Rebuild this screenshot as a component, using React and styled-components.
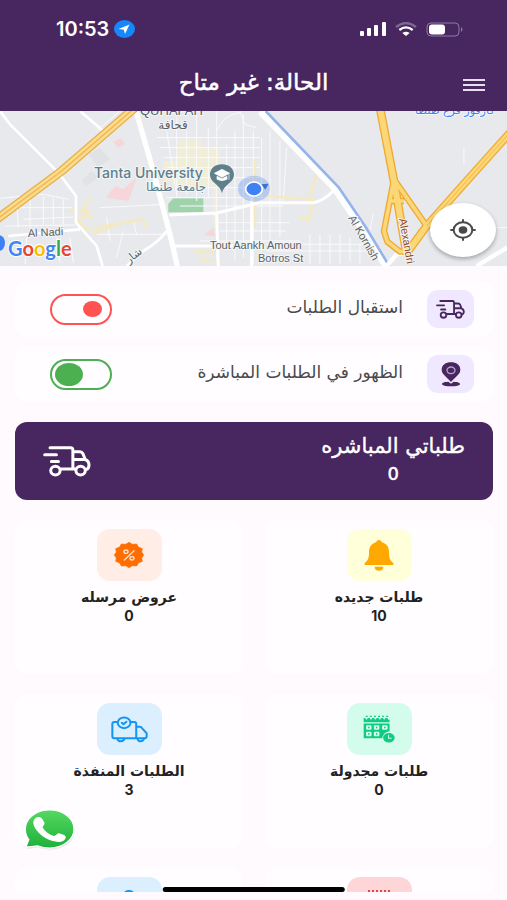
import React, {useState} from 'react';
import styled, {createGlobalStyle} from 'styled-components';

const GlobalStyle = createGlobalStyle`
    * {
        box-sizing: border-box;
    }
    body {
        margin: 0;
        background-color: #fefafe;
        font-family: "DejaVu Sans", sans-serif;
    }
`
const Screen = styled.div`
    display: flex;
    flex-direction: column;
    height: 100vh;
    padding-bottom: 8px;
    background-color: #fefafe;
    overflow: hidden;
`
const Header = styled.header`
    flex: none;
    background-color: #48265f;
    color: white;
`
const StatusBar = styled.div`
    display: flex;
    align-items: center;
    justify-content: space-between;
    direction: ltr;
    height: 58px;
    padding: 0 44px 0 56px;
`
const StatusGroup = styled.div`
    display: flex;
    align-items: center;
    gap: ${props => props.$gap}px;
`
const Clock = styled.span`
    font-family: Inter, sans-serif;
    font-size: 20px;
    font-weight: 600;
`
const TitleBar = styled.div`
    display: grid;
    grid-template-columns: 1fr auto 1fr;
    align-items: center;
    height: 53px;
    padding: 0 22px;
`
const Title = styled.h1`
    margin: 0;
    padding-bottom: 6px;
    font-size: 23px;
    line-height: 28px;
    font-weight: 400;
    -webkit-text-stroke: 0.5px currentColor;
`
const IconButton = styled.button`
    display: flex;
    justify-self: start;
    padding: 0;
    border: none;
    background: none;
    color: #e9ddf0;
    cursor: pointer;
`
const MapBox = styled.section`
    position: relative;
    flex: none;
    height: 155px;
    background-color: #e8eaed;
    overflow: hidden;
`
const MapSvg = styled.svg`
    display: block;
    width: 100%;
    height: 100%;
    direction: ltr;
`
const LocateButton = styled.button`
    position: absolute;
    right: 11px;
    bottom: 9px;
    display: flex;
    align-items: center;
    justify-content: center;
    width: 66px;
    height: 54px;
    padding: 0;
    border: none;
    border-radius: 50%;
    background-color: white;
    box-shadow: 0 2px 4px rgba(0, 0, 0, 0.3);
    cursor: pointer;
`
const Content = styled.main`
    display: flex;
    flex: 1;
    flex-direction: column;
    gap: 20px;
    min-height: 0;
    padding: 15px 14px 0 15px;
    overflow-y: auto;
    scrollbar-width: none;
`
const Switches = styled.div`
    display: flex;
    flex: none;
    flex-direction: column;
    gap: 9px;
`
const SwitchRow = styled.div`
    display: flex;
    align-items: center;
    gap: 24px;
    height: 56px;
    padding: 0 19px 0 35px;
    border-radius: 12px;
    background-color: #fffdff;
`
const Tile = styled.div`
    display: flex;
    flex: none;
    align-items: center;
    justify-content: center;
    width: ${props => props.$large ? 65 : 47}px;
    height: ${props => props.$large ? 52 : 38}px;
    border-radius: ${props => props.$large ? 13 : 11}px;
    background-color: ${props => props.$color};
    color: #48265f;
`
const SwitchLabel = styled.label`
    flex: 1;
    padding-bottom: 4px;
    font-size: 17px;
    line-height: 22px;
    color: #4a4a4a;
`
const Switch = styled.input`
    display: flex;
    align-items: center;
    appearance: none;
    width: 62px;
    height: 31px;
    margin: 0;
    padding: 0 ${props => props.checked ? 3 : 8}px;
    border: 2px solid ${props => props.checked ? '#4caf50' : '#ff5252'};
    border-radius: 20px;
    direction: ${props => props.checked ? 'ltr' : 'rtl'};
    cursor: pointer;

    &::before {
        content: '';
        width: ${props => props.checked ? 28 : 19}px;
        height: ${props => props.checked ? 23 : 16}px;
        border-radius: 50%;
        background-color: ${props => props.checked ? '#4caf50' : '#ff5252'};
    }
`
const Banner = styled.button`
    display: flex;
    flex: none;
    align-items: center;
    justify-content: space-between;
    height: 78px;
    padding: 0 28px;
    border: none;
    border-radius: 12px;
    background-color: #48265f;
    color: white;
    font-family: inherit;
    cursor: pointer;
`
const BannerText = styled.span`
    display: flex;
    flex-direction: column;
    align-items: center;
    padding-bottom: 2px;
    font-size: 21px;
    line-height: 28px;
    -webkit-text-stroke: 0.4px currentColor;
`
const Grid = styled.div`
    display: grid;
    grid-template-columns: 1fr 1fr;
    gap: 20px 22px;
`
const Card = styled.article`
    display: flex;
    flex-direction: column;
    align-items: center;
    height: 154px;
    padding-top: 9px;
    border-radius: 12px;
    background-color: #fffdff;
    color: #222;
`
const CardTitle = styled.h2`
    margin: 6px 0 0;
    font-size: 14px;
    line-height: 20px;
    font-weight: 700;
`
const Count = styled.span`
    font-family: Inter, sans-serif;
    font-size: ${props => props.$big ? 17 : 14}px;
    line-height: ${props => props.$big ? 28 : 18}px;
    font-weight: ${props => props.$big ? 500 : 700};
`
const WhatsappLink = styled.a`
    position: fixed;
    left: 24px;
    bottom: 50px;
    display: flex;
`
const HomeIndicator = styled.div`
    position: fixed;
    left: 50%;
    bottom: 8px;
    width: 36%;
    height: 5px;
    border-radius: 3px;
    background-color: black;
    transform: translateX(-50%);
`

const Truck = ({width, height, stroke}) => (
    <svg width={width} height={height} viewBox="0 0 143 92" preserveAspectRatio="none" fill="none" stroke="currentColor" strokeWidth={stroke} strokeLinecap="round" strokeLinejoin="round">
        <path d="M21 5H82Q89 5 89 12V67M5 26H40M25 46H46M54 68H96M89 17H110Q116 17 119 23L125 38M89 40H125Q137 44 137 56Q137 68 129 70"/>
        <ellipse cx="37" cy="73" rx="14" ry="13"/>
        <ellipse cx="112" cy="73" rx="14" ry="13"/>
    </svg>
)
const PinIcon = () => (
    <svg width="20" height="25" viewBox="0 0 60 75">
        <path d="M30 60C20 46 2 38 2 23C2 9 14 1 30 1S58 9 58 23C58 38 40 46 30 60Z" fill="#48265f"/>
        <ellipse cx="30" cy="25" rx="12" ry="10" fill="none" stroke="#b9a4c9" strokeWidth="4"/>
        <path d="M22 59C7 60 3 63 3 66C3 70 14 73 30 73S57 70 57 66C57 63 53 60 38 59L30 65Z" fill="#48265f"/>
    </svg>
)
const BellIcon = () => (
    <svg width="30" height="31" viewBox="0 0 90 93" fill="#ffa800">
        <path d="M45 0C50 0 53 3 53 7C69 11 75 22 75 38C75 56 79 62 88 69Q91 75 84 75H6Q-1 75 2 69C11 62 15 56 15 38C15 22 21 11 37 7C37 3 40 0 45 0Z"/>
        <path d="M32 80H58C58 88 53 92 45 92S32 88 32 80Z"/>
    </svg>
)
const OfferIcon = () => (
    <svg width="30" height="26" viewBox="0 0 90 78">
        <path d="M45 1L55 7L68 6L73 15L85 20L83 30L89 39L83 48L85 58L73 63L68 72L55 71L45 77L35 71L22 72L17 63L5 58L7 48L1 39L7 30L5 20L17 15L22 6L35 7Z" fill="#ff6d00" stroke="#ff6d00" strokeWidth="2" strokeLinejoin="round"/>
        <g fill="none" stroke="#ffe3d3" strokeWidth="4" strokeLinecap="round">
            <path d="M31 54L60 26"/>
            <ellipse cx="36" cy="29" rx="6" ry="5"/>
            <ellipse cx="54" cy="49" rx="6" ry="5"/>
        </g>
    </svg>
)
const CalendarIcon = () => (
    <svg width="32" height="28" viewBox="0 0 94 82">
        <path d="M8 4H76" stroke="#22c98a" strokeWidth="4" strokeDasharray="6 6"/>
        <path d="M2 9H7Q10 18 14 9H20Q23 18 27 9H33Q36 18 40 9H46Q49 18 53 9H59Q62 18 66 9H72Q75 18 78 12V21H2Z" fill="#10cc82"/>
        <path d="M2 25H78V48C66 48 60 56 56 68H2Z" fill="#10cc82"/>
        <g fill="#d4fcec">
            {[9, 32, 56].map(x => <rect key={x} x={x} y="30" width="16" height="13" rx="3"/>)}
            {[9, 32].map(x => <rect key={x} x={x} y="49" width="16" height="13" rx="3"/>)}
        </g>
        <g fill="#10cc82">
            {[15, 38, 62].map(x => <rect key={x} x={x} y="34" width="4" height="5"/>)}
            {[15, 38].map(x => <rect key={x} x={x} y="53" width="4" height="5"/>)}
        </g>
        <ellipse cx="76" cy="67" rx="17" ry="14" fill="#10cc82"/>
        <path d="M75 58V68H84" fill="none" stroke="#d4fcec" strokeWidth="3"/>
    </svg>
)
const DoneIcon = () => (
    <svg width="37" height="27" viewBox="0 0 110 80" fill="none" stroke="#1296f3" strokeWidth="6" strokeLinecap="round" strokeLinejoin="round">
        <path d="M20 18H10Q4 18 4 24V60Q4 66 10 66H75V24Q75 18 69 18H58M75 32H86Q90 32 92 36L106 51V60Q106 66 100 66H75"/>
        <path d="M19 68Q21 75 29 75T40 68M79 68Q81 75 88 75T98 68"/>
        <ellipse cx="39" cy="20" rx="19" ry="16"/>
        <path d="M32 20L37 24L46 17"/>
    </svg>
)
const PersonIcon = () => (
    <svg width="30" height="28" viewBox="0 0 30 28" fill="#1296f3">
        <ellipse cx="15" cy="6" rx="6" ry="5"/>
        <path d="M3 27C3 10 27 10 27 27Z"/>
    </svg>
)
const RedCalendarIcon = () => (
    <svg width="28" height="28" viewBox="0 0 28 28">
        <path d="M3 2H25" stroke="#e04848" strokeWidth="2" strokeDasharray="2 2"/>
        <rect x="1" y="7" width="26" height="20" rx="1" fill="#e04848"/>
    </svg>
)
const WhatsappIcon = () => (
    <svg width="52" height="42" viewBox="5 0 148 122" preserveAspectRatio="none">
        <defs>
            <linearGradient id="wa" x1="0" y1="0" x2="0" y2="1">
                <stop offset="0" stopColor="#54d961"/>
                <stop offset="1" stopColor="#1fb03b"/>
            </linearGradient>
        </defs>
        <path d="M78 8C116 8 147 31 147 63S116 117 78 117C66 117 55 115 45 111L12 115L20 94C12 85 9 75 9 63C9 31 40 8 78 8Z" fill="#d5d9d5" opacity="0.5" transform="translate(2 4)"/>
        <path d="M78 6C116 6 147 30 147 61S116 116 78 116C66 116 55 114 45 110L11 113L19 92C12 83 9 73 9 61C9 30 40 6 78 6Z" fill="url(#wa)" stroke="white" strokeWidth="3"/>
        <path d="M38 31C44 26 53 27 56 33L62 44C63 48 56 52 56 56C62 69 77 80 91 83C96 83 99 75 104 75L117 79Q125 82 121 89C116 97 104 98 95 96C66 91 41 70 34 49C32 42 33 36 38 31Z" fill="white" stroke="white" strokeWidth="3"/>
    </svg>
)

const MapView = () => (
    <MapSvg viewBox="0 0 507 155" preserveAspectRatio="xMidYMid slice" role="img">
        <rect width="507" height="155" fill="#e7e9ec"/>
        <g transform="scale(0.3333)" fill="none" strokeLinejoin="round">
            <path d="M265 130L300 110L330 145L295 168ZM245 210L275 180L295 200L260 225Z" fill="#e0e2e6"/>
            <path d="M340 92L360 82L376 98L355 110ZM318 260L345 225L370 235L410 200L385 270ZM612 372L640 350L645 376Z" fill="#f6d6d8"/>
            <path d="M540 85H605V110H660V210H490V150H525ZM515 185H650V350H640V225H515Z" fill="#f2eed5" opacity="0.8"/>
            <path d="M505 278L520 262H610V304H505Z" fill="#9fd3aa"/>
            {/* side streets */}
            <g stroke="#fafafb" strokeWidth="3">
                <path d="M0 262L130 250L205 265M20 290H215M70 325L220 318M15 345L225 342M90 260V350M130 255V345M50 265L55 350M160 262V340M190 265V340"/>
                <path d="M470 80H780M480 110H780M490 140H780M500 170H780M510 200H780M525 230H780M500 260H900M540 285H850M650 335H870M660 360H860M600 390H900"/>
                <path d="M500 60L530 250M530 20V260M560 60V250M590 0V270M625 50V260M650 0V455M680 100V400M705 60V450M730 10V440M760 60V460M785 80V460M810 60V400M840 90V380M860 110L850 270"/>
                <path d="M650 60Q670 10 720 5M720 0L735 40L770 50M300 290L500 280M360 0L290 60M320 320L330 390M400 330L410 370M290 370L500 370M350 440L370 360M800 400H1120M800 420H1130M930 370V460M960 370V460M990 370V460M1020 370V460M1050 380V450M1080 400V460M1120 310L1100 400M1392 110V160M1440 350H1521"/>
                <path d="M80 380L75 460M170 370L180 455M210 380L220 455"/>
            </g>
            <g stroke="#f3eac3" strokeWidth="8">
                <path d="M205 300H270L235 330L260 355L430 325L440 352M270 260L245 300L280 325M280 370L350 340M580 420L650 425M600 445L655 450M765 145V350M790 255L940 265L925 335M950 190L925 270M900 320H930"/>
            </g>
            <path d="M0 0L30 40L175 185L228 255V335L290 405L308 465M240 0L310 60M25 375L240 355M380 465L430 420Q480 390 500 360" stroke="white" strokeWidth="8"/>
            <path d="M408 0L460 180L510 370L532 465" stroke="white" strokeWidth="16"/>
            <path d="M508 312L650 306L780 275H940Q970 270 1000 240M520 405H700M650 310L655 465M755 245V465" stroke="white" strokeWidth="9"/>
            <path d="M782 0L1005 230L1080 340L1160 465" stroke="white" strokeWidth="24"/>
            <path d="M797 0L1017 230L1097 348L1168 465" stroke="#94b4ea" strokeWidth="8"/>
            <path d="M1160 465L1190 430L1230 425M1430 465L1521 410" stroke="white" strokeWidth="13"/>
            {/* highways, dark casing first */}
            {[['#e8b04a', 27], ['#fbdc8c', 19]].map(([color, width]) => (
                <path key={color} d="M-10 325L185 180L405 -10" stroke={color} strokeWidth={width}/>
            ))}
            <path d="M-10 325L185 180L405 -10" stroke="#edb655" strokeWidth="4"/>
            {[['#f0aa32', 0], ['#fcd777', -8]].map(([color, d]) => (
                <g key={color} stroke={color}>
                    <path d="M1140 -10L1182 210L1220 430" strokeWidth={26 + d}/>
                    <path d="M1182 205L1152 360L1162 392L1200 422H1225L1280 345L1182 205M1168 270H1212" strokeWidth={19 + d}/>
                    <path d="M1225 420L1280 345L1400 210L1530 65" strokeWidth={25 + d}/>
                </g>
            ))}
            <path d="M1280 345L1400 210L1530 65" stroke="#f3b84c" strokeWidth="3"/>
            {/* campus marker */}
            <path d="M666 246C660 220 630 215 630 192C630 172 646 160 666 160S702 172 702 192C702 215 672 220 666 246Z" fill="#5f7f8a"/>
            <path d="M666 175L689 187L666 199L643 187ZM651 196V205Q666 213 681 205V196L666 203ZM687 190V206" fill="white" stroke="white" strokeWidth="2"/>
            {/* current position */}
            <ellipse cx="762" cy="233" rx="48" ry="39" fill="#5f8ef0" opacity="0.35"/>
            <path d="M784 220L806 218L796 236Z" fill="#3a72cf"/>
            <ellipse cx="762" cy="234" rx="25" ry="21" fill="#3f80f5" stroke="white" strokeWidth="5"/>
            <ellipse cx="-4" cy="396" rx="19" ry="24" fill="#3f80f5"/>
        </g>
        <g fontFamily="'Liberation Sans', sans-serif" fontSize="11" fill="#5b5f63" stroke="#f4f5f6" strokeWidth="2" paintOrder="stroke">
            <text x="140" y="4" fontSize="13">QUHAFAH</text>
            <text x="173" y="18" fontSize="12" textAnchor="middle" fontFamily="'DejaVu Sans', sans-serif">قحافة</text>
            <text x="94" y="67" fontSize="14" fontWeight="500" fontFamily="Inter, sans-serif" fill="#5c7f8b">Tanta University</text>
            <text x="146" y="80" fontSize="12" fontFamily="'DejaVu Sans', sans-serif" fill="#5c7f8b">جامعة طنطا</text>
            <text x="28" y="126" transform="rotate(-3 28 126)">Al Nadi</text>
            <text x="210" y="138">Tout Aankh Amoun</text>
            <text x="258" y="151">Botros St</text>
            <text x="348" y="107" transform="rotate(60 348 107)">Al Kornish</text>
            <text x="399" y="108" fill="#914b25" transform="rotate(80 399 108)">Alexandri</text>
            <text x="129" y="153" transform="rotate(-40 129 153)" fontFamily="'DejaVu Sans', sans-serif">شار</text>
            <text x="415" y="3" fill="#3f80f5" fontFamily="'DejaVu Sans', sans-serif">كارفور فرع طنطا</text>
        </g>
        <text x="8" y="145" fontFamily="Lato, sans-serif" fontSize="20" fontWeight="700" stroke="white" strokeWidth="2" paintOrder="stroke">
            <tspan fill="#4285f4">G</tspan>
            <tspan fill="#ea4335">o</tspan>
            <tspan fill="#fbbc04">o</tspan>
            <tspan fill="#4285f4">g</tspan>
            <tspan fill="#34a853">l</tspan>
            <tspan fill="#ea4335">e</tspan>
        </text>
    </MapSvg>
)

const cards = [
    {title: 'طلبات جديده', count: 10, color: '#ffffd9', icon: <BellIcon />},
    {title: 'عروض مرسله', count: 0, color: '#ffede6', icon: <OfferIcon />},
    {title: 'طلبات مجدولة', count: 0, color: '#d4fcec', icon: <CalendarIcon />},
    {title: 'الطلبات المنفذة', count: 3, color: '#dbefff', icon: <DoneIcon />},
    {color: '#ffd6d8', icon: <RedCalendarIcon />},
    {color: '#dbefff', icon: <PersonIcon />},
]

export default function App() {
    const [receiving, setReceiving] = useState(false);
    const [visible, setVisible] = useState(true);
    return (
        <Screen dir="rtl" lang="ar">
            <GlobalStyle />
            <Header>
                <StatusBar>
                    <StatusGroup $gap={5}>
                        <Clock>10:53</Clock>
                        <svg width="21" height="18" viewBox="0 0 21 18">
                            <ellipse cx="10.5" cy="9" rx="10.5" ry="9" fill="#1687fc"/>
                            <path d="M15.5 4.5L4.5 9L9.8 9.8L11 14Z" fill="white"/>
                        </svg>
                    </StatusGroup>
                    <StatusGroup $gap={9}>
                        <svg width="26" height="14" viewBox="0 0 26 14" fill="white">
                            <rect x="0" y="9" width="4" height="5" rx="1"/>
                            <rect x="7" y="6" width="4" height="8" rx="1"/>
                            <rect x="14" y="3" width="4" height="11" rx="1"/>
                            <rect x="22" y="0" width="4" height="14" rx="1"/>
                        </svg>
                        <svg width="22" height="14" viewBox="0 0 66 42" fill="none" stroke="white" strokeWidth="7">
                            <path d="M3 15Q33 -9 63 15" opacity="0.3"/>
                            <path d="M13 24Q33 8 53 24"/>
                            <path d="M22 33Q33 25 44 33L33 42Z" fill="white" stroke="none"/>
                        </svg>
                        <svg width="37" height="15" viewBox="0 0 37 15">
                            <rect x="1" y="1" width="32" height="13" rx="4" fill="none" stroke="#8f7a9e"/>
                            <rect x="3" y="2.5" width="16" height="10" rx="3" fill="white"/>
                            <path d="M35 5Q38 7.500 35 10Z" fill="#8f7a9e"/>
                        </svg>
                    </StatusGroup>
                </StatusBar>
                <TitleBar>
                    <IconButton type="button" aria-label="القائمة">
                        <svg width="22" height="14" viewBox="0 0 22 14" stroke="currentColor" strokeWidth="2">
                            <path d="M0 2H22M0 7H22M0 12H22"/>
                        </svg>
                    </IconButton>
                    <Title>الحالة: غير متاح</Title>
                </TitleBar>
            </Header>
            <MapBox>
                <MapView />
                <LocateButton type="button" aria-label="موقعي">
                    <svg width="26" height="22" viewBox="0 0 78 66" fill="none" stroke="#4a4a4a" strokeWidth="6">
                        <ellipse cx="39" cy="33" rx="28" ry="23"/>
                        <ellipse cx="39" cy="33" rx="10" ry="8" fill="#4a4a4a"/>
                        <path d="M39 1V11M39 55V65M1 33H12M66 33H77"/>
                    </svg>
                </LocateButton>
            </MapBox>
            <Content>
                <Switches>
                    <SwitchRow>
                        <Tile $color="#f0e8fe"><Truck width={29} height={19} stroke={9} /></Tile>
                        <SwitchLabel htmlFor="receiving">استقبال الطلبات</SwitchLabel>
                        <Switch id="receiving" type="checkbox" checked={receiving} onChange={e => setReceiving(e.target.checked)} />
                    </SwitchRow>
                    <SwitchRow>
                        <Tile $color="#f0e8fe"><PinIcon /></Tile>
                        <SwitchLabel htmlFor="visible">الظهور في الطلبات المباشرة</SwitchLabel>
                        <Switch id="visible" type="checkbox" checked={visible} onChange={e => setVisible(e.target.checked)} />
                    </SwitchRow>
                </Switches>
                <Banner type="button">
                    <BannerText>
                        <span>طلباتي المباشره</span>
                        <Count $big>0</Count>
                    </BannerText>
                    <Truck width={48} height={31} stroke={9} />
                </Banner>
                <Grid>
                    {cards.map((card, i) => (
                        <Card key={i}>
                            <Tile $large $color={card.color}>{card.icon}</Tile>
                            {card.title && (
                                <>
                                    <CardTitle>{card.title}</CardTitle>
                                    <Count>{card.count}</Count>
                                </>
                            )}
                        </Card>
                    ))}
                </Grid>
            </Content>
            <WhatsappLink href="#whatsapp" aria-label="واتساب"><WhatsappIcon /></WhatsappLink>
            <HomeIndicator />
        </Screen>
    )
}
